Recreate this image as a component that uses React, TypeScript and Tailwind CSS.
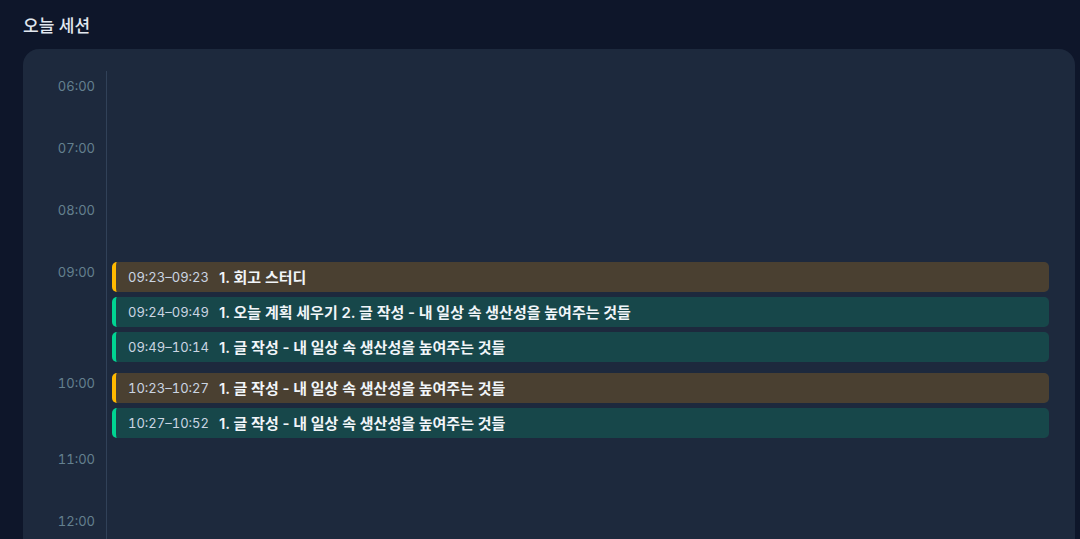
import React from "react";

type Session = { time: string; title: string; kind: "amber" | "teal" };

const hours: { label: string; sessions: Session[] }[] = [
  { label: "06:00", sessions: [] },
  { label: "07:00", sessions: [] },
  { label: "08:00", sessions: [] },
  {
    label: "09:00",
    sessions: [
      { time: "09:23–09:23", title: "1. 회고 스터디", kind: "amber" },
      { time: "09:24–09:49", title: "1. 오늘 계획 세우기 2. 글 작성 - 내 일상 속 생산성을 높여주는 것들", kind: "teal" },
      { time: "09:49–10:14", title: "1. 글 작성 - 내 일상 속 생산성을 높여주는 것들", kind: "teal" },
    ],
  },
  {
    label: "10:00",
    sessions: [
      { time: "10:23–10:27", title: "1. 글 작성 - 내 일상 속 생산성을 높여주는 것들", kind: "amber" },
      { time: "10:27–10:52", title: "1. 글 작성 - 내 일상 속 생산성을 높여주는 것들", kind: "teal" },
    ],
  },
  { label: "11:00", sessions: [] },
  { label: "12:00", sessions: [] },
];

function SessionBar({ s }: { s: Session }) {
  const cls =
    s.kind === "amber"
      ? "bg-amber-500/20 border-amber-400"
      : "bg-emerald-500/20 border-emerald-400";
  return (
    <div className={`flex h-[30px] items-center gap-[10px] rounded-[5px] border-l-4 pl-3 ${cls}`}>
      <span className="text-[13px] leading-none tabular-nums text-slate-300">{s.time}</span>
      <span className="text-[15px] font-semibold leading-none text-slate-100">{s.title}</span>
    </div>
  );
}

export default function App() {
  return (
    <div
      className="min-h-screen bg-[#0e162a] pt-[13px]"
      style={{ fontFamily: 'Inter, "Noto Sans CJK KR", sans-serif' }}
    >
      <h2 className="ml-[23px] mb-[10px] text-[17px] font-medium leading-[26px] text-slate-200">오늘 세션</h2>
      <div className="ml-[23px] mr-[5px] rounded-2xl bg-slate-800 pt-[22px] pb-6 pr-[26px]">
        {hours.map((h) => (
          <div key={h.label} className="flex">
            <div className="w-[83px] shrink-0 pr-[11px] pt-[7px] text-right text-[13px] leading-[16px] tabular-nums text-[#64808f]">
              {h.label}
            </div>
            <div className="flex min-h-[62px] flex-1 flex-col gap-[5px] border-l border-slate-700 pl-[5px] pt-[5px] pb-[6px]">
              {h.sessions.map((s, i) => (
                <SessionBar key={i} s={s} />
              ))}
            </div>
          </div>
        ))}
      </div>
    </div>
  );
}
